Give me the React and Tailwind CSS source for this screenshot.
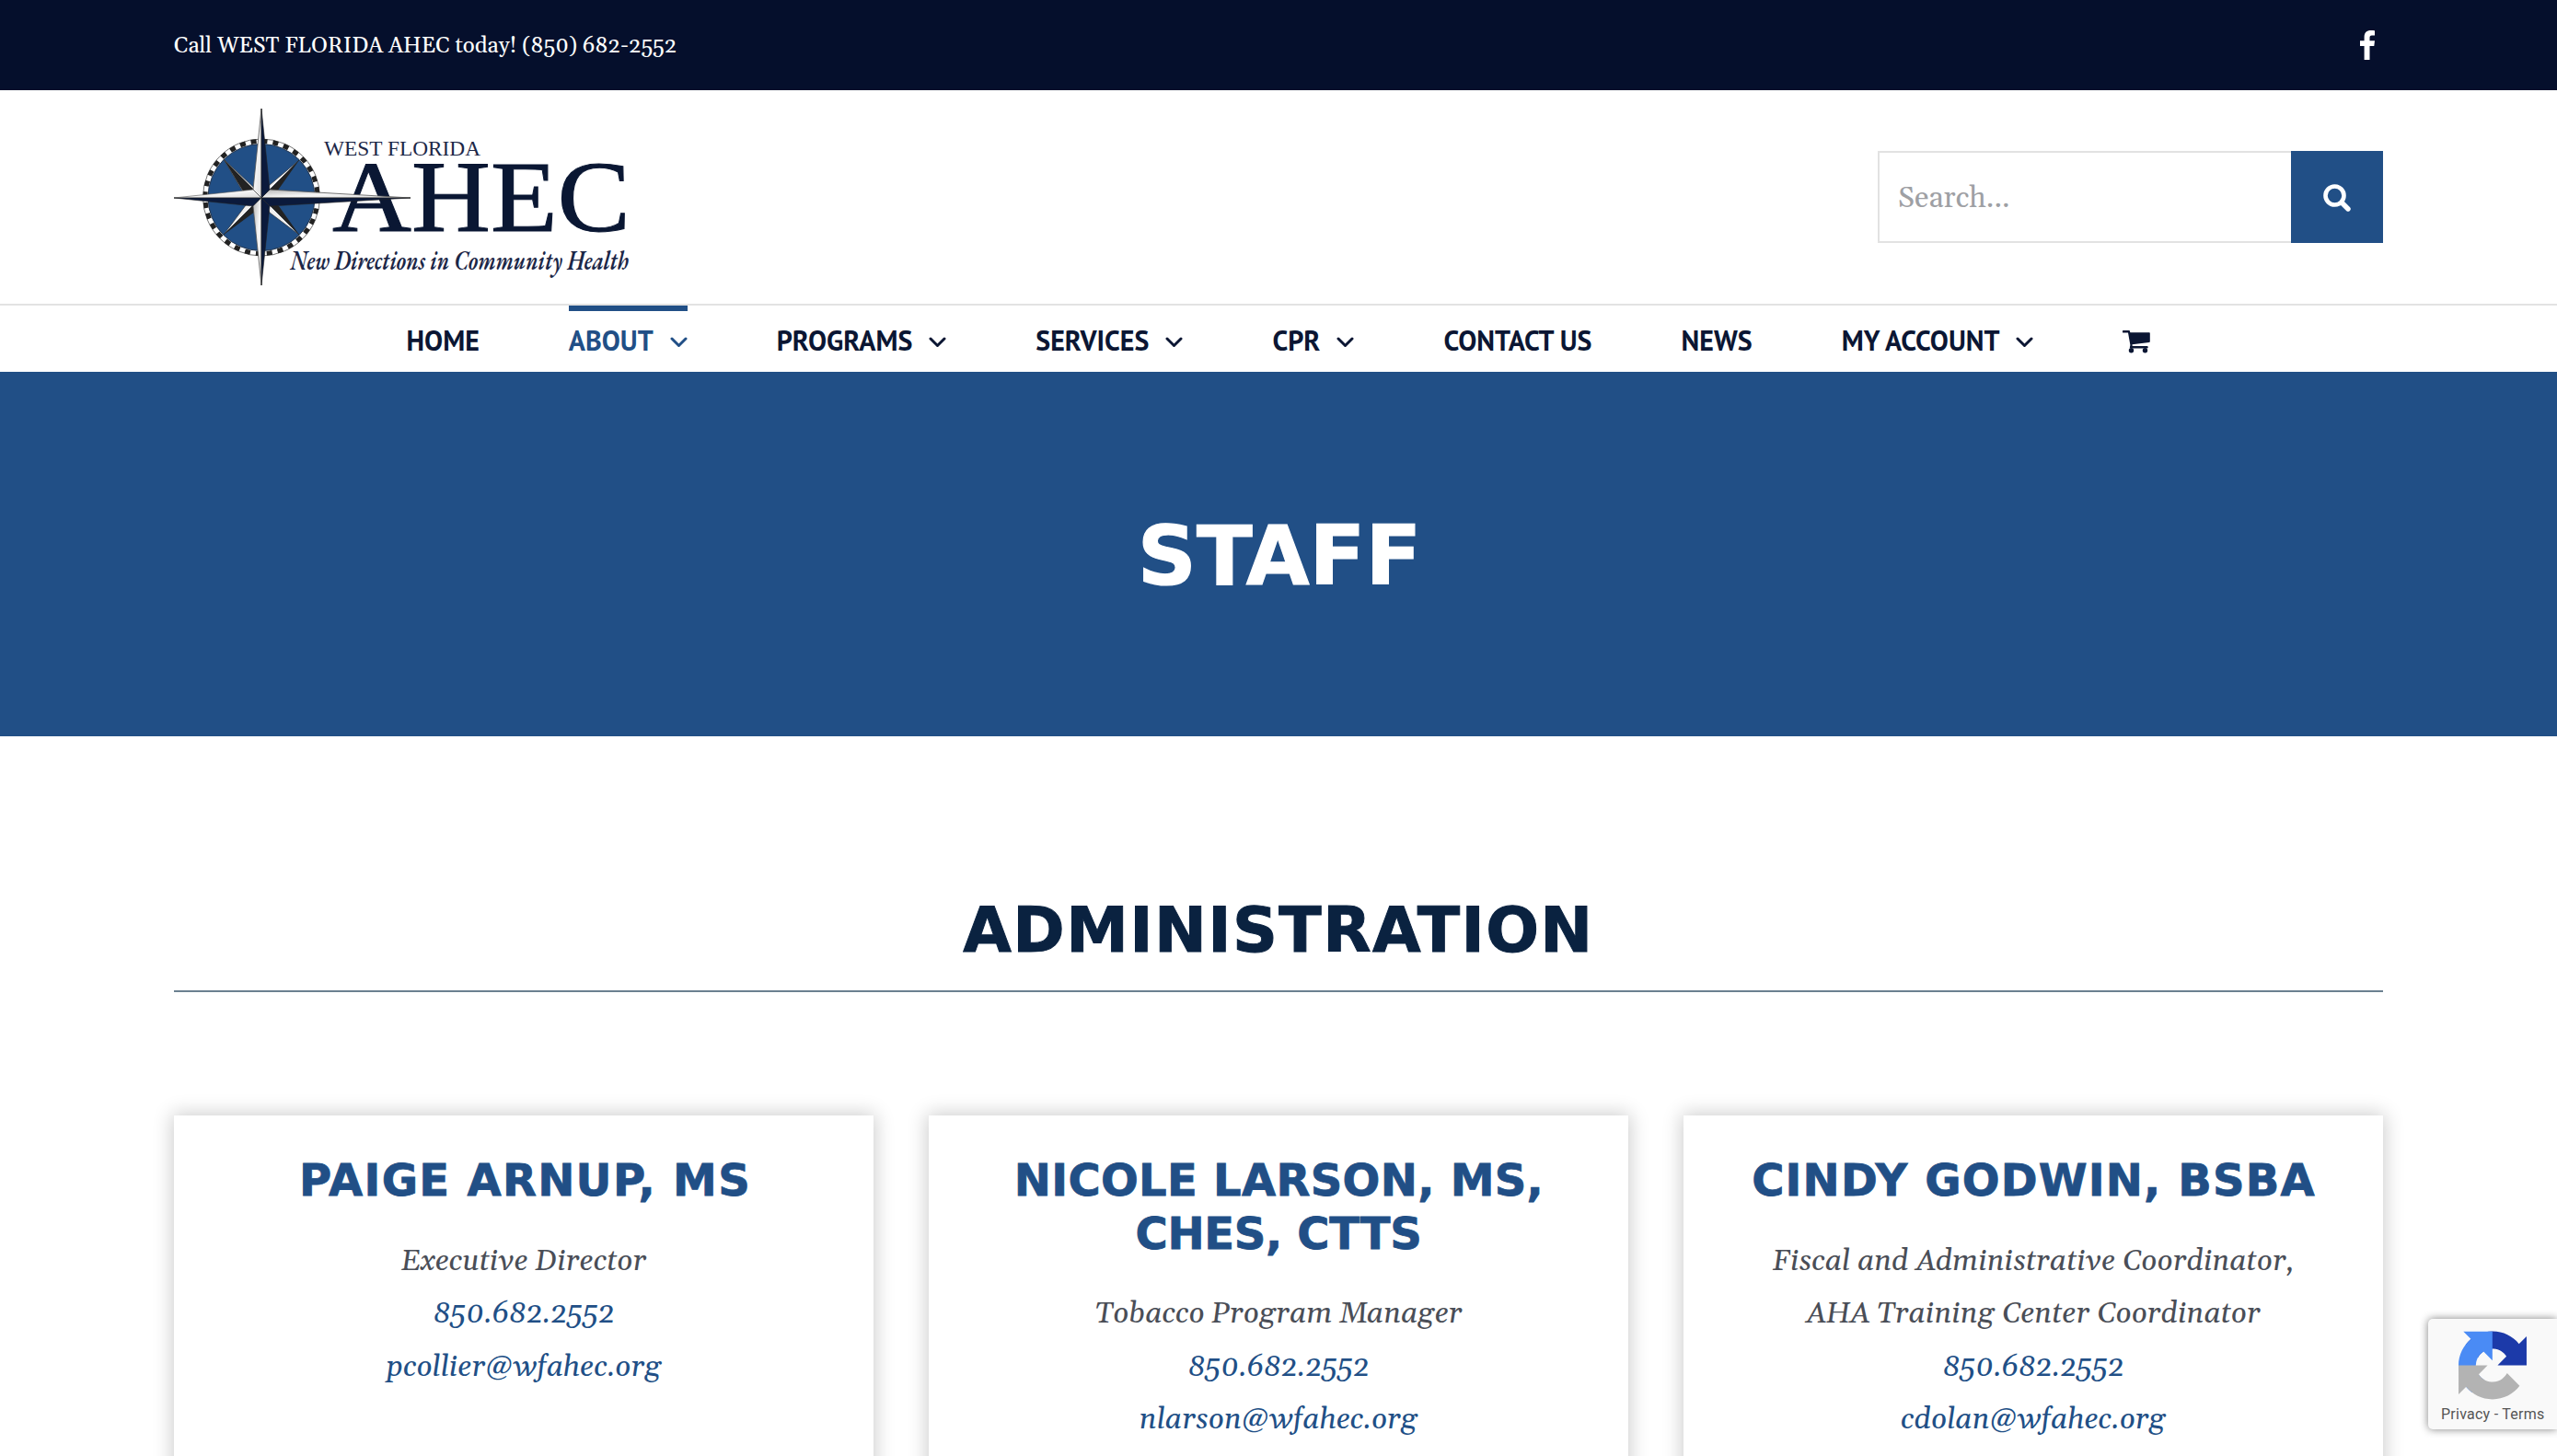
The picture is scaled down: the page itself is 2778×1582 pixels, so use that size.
import React from 'react';

const serif = "font-[Gelasio,Georgia,'Liberation_Serif',serif]";
const verdana = "font-[Verdana,'DejaVu_Sans',sans-serif]";

const NAV = [
  { label: 'HOME' },
  { label: 'ABOUT', menu: true, active: true },
  { label: 'PROGRAMS', menu: true },
  { label: 'SERVICES', menu: true },
  { label: 'CPR', menu: true },
  { label: 'CONTACT US' },
  { label: 'NEWS' },
  { label: 'MY ACCOUNT', menu: true },
];

const STAFF = [
  {
    name: [{ text: 'PAIGE ARNUP, MS', tracking: 'pl-[3px] tracking-[1.3px]' }],
    roles: ['Executive Director'],
    email: 'pcollier@wfahec.org',
  },
  {
    name: [
      { text: 'NICOLE LARSON, MS,', tracking: 'pl-[1px] tracking-[0.3px]' },
      { text: 'CHES, CTTS', tracking: 'tracking-[-0.3px]' },
    ],
    roles: ['Tobacco Program Manager'],
    email: 'nlarson@wfahec.org',
  },
  {
    name: [{ text: 'CINDY GODWIN, BSBA', tracking: 'pl-[1px] tracking-[1.15px]' }],
    roles: ['Fiscal and Administrative Coordinator,', 'AHA Training Center Coordinator'],
    email: 'cdolan@wfahec.org',
  },
];

function Star() {
  return (
    <g strokeLinejoin="round">
      {/* diagonal rays */}
      <path d="M54 56 L86 86 L95 97 L80 100Z" fill="#f1f1f1" stroke="#222" strokeWidth="0.6" />
      <path d="M54 56 L95 97 L80 99Z" fill="#222" />
      <path d="M136 57 L96 97 L104 84Z" fill="#f4f4f4" stroke="#222" strokeWidth="0.6" />
      <path d="M136 57 L96 97 L112 91Z" fill="#222" />
      <path d="M54 138 L95 97 L78 106Z" fill="#f1f1f1" stroke="#222" strokeWidth="0.6" />
      <path d="M54 138 L95 97 L88 113Z" fill="#222" />
      <path d="M136 138 L95 97 L104 114Z" fill="#f1f1f1" stroke="#222" strokeWidth="0.6" />
      <path d="M136 138 L95 97 L114 107Z" fill="#222" />
      {/* horizontal rays */}
      <path d="M0 98 L86 89 L95 98Z" fill="url(#raySilver)" stroke="#555" strokeWidth="0.6" />
      <path d="M0 98 L86 107 L95 98Z" fill="#0b1a3c" stroke="#222" strokeWidth="0.6" />
      <path d="M257 98 L104 89 L95 98Z" fill="url(#raySilver)" stroke="#555" strokeWidth="0.8" />
      <path d="M257 98 L104 107 L95 98Z" fill="#0b1a3c" stroke="#222" strokeWidth="0.6" />
      {/* vertical rays */}
      <path d="M95 1 L86 89 L95 98Z" fill="url(#raySilver)" stroke="#555" strokeWidth="0.8" />
      <path d="M95 1 L104 89 L95 98Z" fill="#0b1a3c" stroke="#222" strokeWidth="0.6" />
      <path d="M95 193 L86 107 L95 98Z" fill="url(#raySilver)" stroke="#555" strokeWidth="0.8" />
      <path d="M95 193 L104 107 L95 98Z" fill="#0b1a3c" stroke="#222" strokeWidth="0.6" />
    </g>
  );
}

function Logo() {
  return (
    <svg viewBox="0 0 496 196" className="h-[196px] w-[496px] overflow-visible" aria-label="West Florida AHEC">
      <defs>
        <linearGradient id="raySilver" x1="0" y1="0" x2="1" y2="1">
          <stop offset="0" stopColor="#b5b5b5" />
          <stop offset="0.5" stopColor="#f6f6f6" />
          <stop offset="1" stopColor="#dcdcdc" />
        </linearGradient>
      </defs>
      <circle cx="95" cy="97.500" r="63.500" fill="#fff" stroke="#777" strokeWidth="1" />
      <circle cx="95" cy="97.500" r="61" fill="none" stroke="#222" strokeWidth="5" strokeDasharray="5.990 5.990" />
      <circle cx="95" cy="97.500" r="58" fill="#214f86" stroke="#24364f" strokeWidth="1" />
      <text x="163" y="51.500" textLength="170" lengthAdjust="spacingAndGlyphs" fill="#1c2747" className="font-['Liberation_Serif',serif] text-[24px]">WEST FLORIDA</text>
      <text x="172" y="134" textLength="324" lengthAdjust="spacingAndGlyphs" fill="#0a1733" stroke="#0a1733" strokeWidth="1" className="font-['Liberation_Serif',serif] text-[110px]">AHEC</text>
      <text x="126" y="176" textLength="368" lengthAdjust="spacingAndGlyphs" fill="#1c2747" className="font-['EB_Garamond','Liberation_Serif',serif] text-[29px] font-semibold italic">New Directions in Community Health</text>
      <Star />
    </svg>
  );
}

function Chevron() {
  return (
    <svg viewBox="0 0 19 12" className="mt-[4px] ml-[18px] h-[12px] w-[19px]" fill="none" stroke="currentColor" strokeWidth="3" strokeLinecap="round" strokeLinejoin="round">
      <path d="M2 2 L9.500 9.500 L17 2" />
    </svg>
  );
}

function Cart() {
  return (
    <svg viewBox="0 0 30 25" className="mt-[4px] h-[25px] w-[30px]" fill="currentColor">
      <path d="M1 0 h6 a1 1 0 0 1 1 1 l.3 1.200 H29 a.8.800 0 0 1 .8.800 V12 a1 1 0 0 1-.9 1 L10.500 15.200 L10.700 17 H26.500 a1.200 1.200 0 0 1 0 2.500 H9 a1.200 1.200 0 0 1-1.100-1.500 L8.400 16 L6 2.600 H1 A1.300 1.300 0 0 1 1 0z" />
      <circle cx="9.500" cy="21.700" r="2.700" />
      <circle cx="24.500" cy="21.700" r="2.700" />
    </svg>
  );
}

function Recaptcha() {
  return (
    <div className="absolute right-0 bottom-[29px] flex h-[120px] w-[140px] flex-col overflow-visible rounded-l-[5px] bg-[#f9f9f9] pt-[13px] pl-[14px] shadow-[0_0_10px_rgba(128,128,128,1)]">
      <svg viewBox="0 0 64 64" className="ml-[19px] h-[75px] w-[74px]">
        <path fill="#1c3aa9" d="M64 31.955l-.033-1.370V4.687l-7.160 7.160C50.948 4.674 42.033.093 32.050.093c-10.400 0-19.622 4.960-25.458 12.640l11.736 11.860a15.550 15.550 0 0 1 4.754-5.334c2.050-1.600 4.952-2.906 8.968-2.906.485 0 .860.057 1.135.163 4.976.393 9.288 3.140 11.828 7.124l-8.307 8.307L64 31.953" />
        <path fill="#4a8bf5" d="M31.862.094l-1.370.033H4.594l7.160 7.160C4.580 13.147 0 22.060 0 32.046c0 10.400 4.960 19.622 12.640 25.458L24.500 45.768a15.550 15.550 0 0 1-5.334-4.754c-1.600-2.050-2.906-4.952-2.906-8.968 0-.485.057-.860.163-1.135.393-4.976 3.140-9.288 7.124-11.828l8.307 8.307L31.860.095" />
        <path fill="#b3b3b3" d="M.001 32.045l.033 1.370v25.898l7.160-7.160c5.860 7.173 14.774 11.754 24.760 11.754 10.400 0 19.622-4.960 25.458-12.640l-11.736-11.860a15.550 15.550 0 0 1-4.754 5.334c-2.050 1.600-4.952 2.906-8.968 2.906-.485 0-.860-.057-1.135-.163-4.976-.393-9.288-3.140-11.828-7.124l8.307-8.307c-10.522.040-22.400.066-27.295-.005" />
      </svg>
      <div className="mt-[6px] font-[Roboto,sans-serif] text-base leading-5 tracking-[0.25px] whitespace-pre text-[#555]">Privacy - Terms</div>
    </div>
  );
}

function StaffCard({ person }) {
  return (
    <article className="h-[600px] bg-white pt-[42px] text-center shadow-[0_0_20px_2px_rgba(0,0,0,0.2)]">
      <h3 className={`${verdana} text-5xl leading-[57.6px] font-bold text-[#214f86] [-webkit-text-stroke:0.8px_#214f86]`}>
        {person.name.map((line) => (
          <span key={line.text} className={`block ${line.tracking}`}>{line.text}</span>
        ))}
      </h3>
      <div className="mt-[30px] text-[32px] leading-[57.6px] text-[#4a4e57] italic">
        {person.roles.map((role) => <p key={role}>{role}</p>)}
        <p className="text-[#214f86]">850.682.2552</p>
        <p className="text-[#214f86]">{person.email}</p>
      </div>
    </article>
  );
}

export default function App() {
  return (
    <div className={`relative h-[1582px] w-[2778px] overflow-hidden bg-white ${serif}`}>
      <div className="flex h-[98px] items-center justify-between bg-[#050f2c] px-[189px] text-white">
        <p className="pt-[2px] text-2xl">Call WEST FLORIDA AHEC today! (850) 682-2552</p>
        <svg viewBox="0 0 16 32" className="mr-[9px] h-[32px] w-[16px]" fill="currentColor" aria-label="Facebook">
          <path d="M16 .3v5.100h-3.100c-2 0-2.400 1-2.400 2.600v3.300h5.500l-.7 5.600h-4.800V32H4.600V16.900H0v-5.600h4.600V7.100C4.600 2.500 7.400 0 11.600 0c2 0 3.700.1 4.400.3z" />
        </svg>
      </div>

      <header className="flex h-[234px] items-start justify-between border-b-2 border-[#e2e2e2] pr-[189px] pl-[189px]">
        <div className="pt-[19px]"><Logo /></div>
        <form className="mt-[66px] flex h-[100px] w-[549px]">
          <div className="flex flex-1 items-center border-2 border-r-0 border-[#e2e2e2] pt-[3px] pl-5 text-[32px] text-[#9ea0a4]">Search...</div>
          <button type="button" className="flex w-[100px] items-center justify-center bg-[#214f86] pt-[2px] text-white">
            <svg viewBox="0 0 30 30" className="size-[30px]" fill="none" stroke="currentColor" strokeLinecap="round">
              <circle cx="12.500" cy="12.500" r="10" strokeWidth="4.600" />
              <path d="M20.500 20.500 L27 27" strokeWidth="5.400" />
            </svg>
          </button>
        </form>
      </header>

      <nav className="flex h-[72px] justify-center gap-[97px] font-['PT_Sans','Open_Sans',sans-serif] text-[30px] font-bold text-[#0b1633]">
        {NAV.map((item) => (
          <a
            key={item.label}
            className={`flex items-center border-t-[6px] pb-[3px] ${item.active ? 'border-[#214f86] text-[#214f86]' : 'border-transparent'}`}
          >
            {item.label}
            {item.menu && <Chevron />}
          </a>
        ))}
        <a className="flex items-center border-t-[6px] border-transparent pb-[4px]"><Cart /></a>
      </nav>

      <section className="flex h-[396px] justify-center bg-[#214f86] pt-[155px]">
        <h1 className={`${verdana} pl-[2px] text-[89px] leading-[90px] font-bold text-white [-webkit-text-stroke:1.2px_white]`}>STAFF</h1>
      </section>

      <main className="px-[189px] pt-[177px]">
        <h2 className={`${verdana} h-[101px] border-b-2 border-[#6b8090] text-center text-[68px] leading-none font-bold tracking-[1.4px] text-[#0a2240] [-webkit-text-stroke:1px_#0a2240]`}>
          ADMINISTRATION
        </h2>
        <div className="mt-[134px] grid grid-cols-3 gap-[60px]">
          {STAFF.map((person) => <StaffCard key={person.email} person={person} />)}
        </div>
      </main>

      <Recaptcha />
    </div>
  );
}
